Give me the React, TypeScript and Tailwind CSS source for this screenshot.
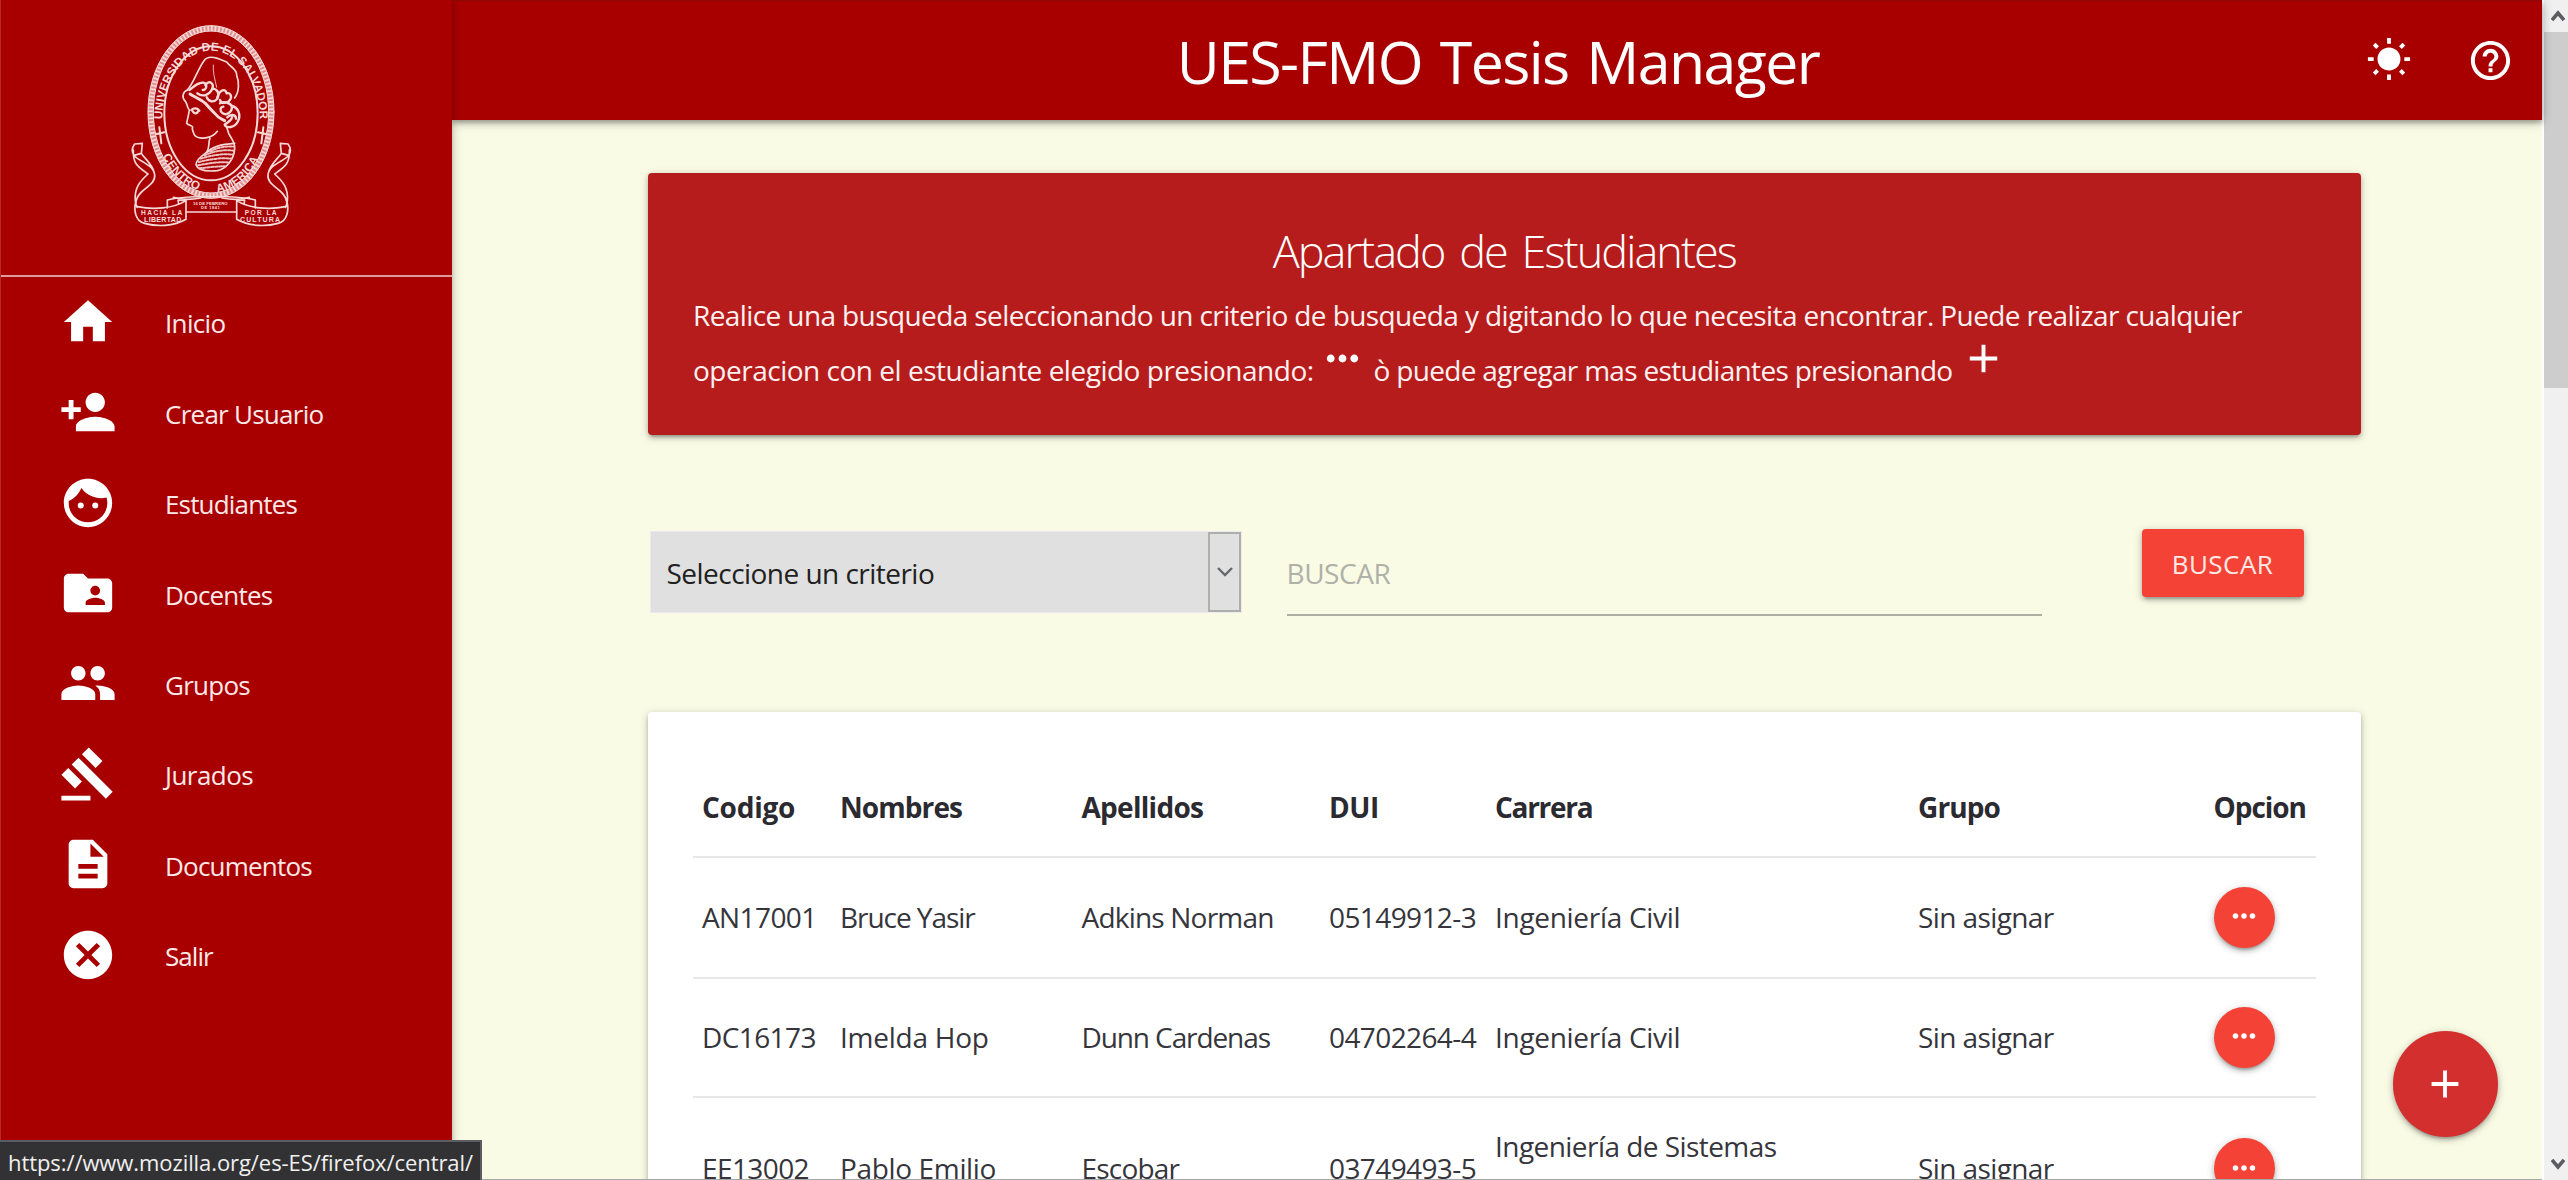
import type { ReactNode } from "react";
import {
  MdAdd,
  MdCancel,
  MdDescription,
  MdFace,
  MdFolderShared,
  MdGavel,
  MdGroup,
  MdHelpOutline,
  MdHome,
  MdMoreHoriz,
  MdPersonAdd,
  MdWbSunny,
} from "react-icons/md";

const SHADOW =
  "shadow-[0_3px_4px_0_rgba(0,0,0,0.14),0_5px_2px_-3px_rgba(0,0,0,0.14),0_2px_8px_0_rgba(0,0,0,0.22)]";

function Emblem() {
  return (
    <svg viewBox="0 0 600 690" className="h-[230px] w-[200px]" fill="none" stroke="#f6dada" strokeLinecap="round" strokeLinejoin="round">
      <defs>
        <path id="ring-top" d="M157 328 A146 206 0 0 1 449 328" />
        <path id="ring-left" d="M158 438 A172 242 0 0 0 268 541" />
        <path id="ring-right" d="M322 547 A172 242 0 0 0 450 438" />
      </defs>

      {/* rope border and inner oval */}
      <ellipse cx="303" cy="306" rx="181" ry="251" strokeWidth="17" stroke="#e08f8f" />
      <ellipse cx="303" cy="306" rx="181" ry="251" strokeWidth="15" strokeDasharray="5 6" strokeLinecap="butt" />
      <ellipse cx="303" cy="306" rx="189" ry="259" strokeWidth="3" />
      <ellipse cx="303" cy="306" rx="173" ry="243" strokeWidth="3" />
      <ellipse cx="303" cy="310" rx="140" ry="201" strokeWidth="6" />

      <g fill="#f6dada" stroke="none" className="font-['Liberation_Sans',sans-serif] text-[35px] font-bold">
        <text><textPath href="#ring-top" textLength="556">UNIVERSIDAD DE EL SALVADOR</textPath></text>
        <text><textPath href="#ring-left" textLength="152">CENTRO</textPath></text>
        <text><textPath href="#ring-right" textLength="166">AMERICA</textPath></text>
      </g>
      <g strokeWidth="6">
        <path d="M148 352l6 48M139 372l24 -5M460 352l-6 48M444 367l24 5" />
      </g>

      {/* bust in profile */}
      <g strokeWidth="5">
        <path d="M232 240C250 222 262 180 282 152C292 138 306 140 322 145L350 156C362 172 382 178 380 196C388 216 388 246 374 264" />
        <path d="M310 165C308 185 314 205 320 232" strokeWidth="2.5" />
        <path d="M232 240C218 246 214 262 226 274C232 280 230 292 238 300C236 315 232 328 230 340C238 348 246 346 248 352C244 358 250 364 252 372C258 386 280 386 294 382C306 380 316 372 322 364" />
        <path d="M240 252C256 262 272 268 286 280C296 292 306 302 316 312C326 326 336 328 344 332" strokeWidth="9" />
        <path d="M238 240C256 226 268 216 280 218C294 222 290 240 278 240M286 226C298 206 314 222 306 238C298 256 276 262 262 250M306 236C322 236 330 250 322 266C312 278 296 276 290 262" strokeWidth="7" />
        <path d="M322 262C330 236 346 236 350 250C362 246 368 262 358 272C350 282 332 280 330 270M330 280C340 274 360 276 366 290C366 306 350 318 338 310C328 302 330 292 340 290" strokeWidth="7" />
        <path d="M366 288C384 292 394 314 384 334C374 354 350 356 344 344C352 336 364 334 366 322M352 322C360 312 378 312 378 326" strokeWidth="7" />
        <path d="M244 300C252 292 262 294 268 302M248 304C252 312 262 312 264 304" strokeWidth="7" />
        <path d="M300 384C294 400 300 412 290 426C276 440 258 448 258 464C264 484 300 484 322 482C348 476 372 450 374 416C376 396 362 384 356 370L350 352" />
        <path d="M290 428C304 412 336 402 374 400" />
      </g>
      <g strokeWidth="6" strokeDasharray="7 5" stroke="#efc0c0">
        <path d="M300 424C322 412 348 408 372 410M284 436C310 424 340 418 372 422M272 446C304 436 338 430 370 434M266 456C300 448 334 442 364 446M264 466C296 460 330 454 356 458M268 475C296 472 326 468 344 469" />
      </g>

      {/* ribbon scrolls */}
      <g strokeWidth="5">
        <path d="M97 400L94 430L72 436C64 424 68 410 74 402L97 400M72 436C82 452 130 462 134 494C138 530 84 536 78 574C76 582 80 590 82 592M94 430C104 446 126 462 132 486M70 420C68 462 84 470 114 492M114 492C90 514 72 534 76 574" />
        <path d="M511 400L514 430L536 436C544 424 540 410 534 402L511 400M536 436C526 452 478 462 474 494C470 530 524 536 530 574C532 582 528 590 526 592M514 430C504 446 482 462 476 486M538 420C540 462 524 470 494 492M494 492C518 514 536 534 532 574" />
        <path d="M78 572C70 600 76 634 104 640C140 650 190 650 228 628V572C190 596 130 600 82 590M228 572L204 570L206 582M172 594V570C220 556 390 556 436 570V594M228 606H380" />
        <path d="M530 572C538 600 532 634 504 640C468 650 418 650 380 628V572C418 596 478 600 526 590M380 572L404 570L402 582" />
        <path d="M190 562C220 572 250 568 272 564M418 562C388 572 358 568 336 564" />
      </g>
      <g fill="#f6dada" stroke="none" textAnchor="middle" className="font-['Liberation_Sans',sans-serif] font-bold">
        <text x="155" y="616" className="text-[20px]" textLength="124">HACIA LA</text>
        <text x="158" y="637" className="text-[21px]" textLength="112">LIBERTAD</text>
        <text x="452" y="614" className="text-[20px]" textLength="96">POR LA</text>
        <text x="450" y="636" className="text-[21px]" textLength="120">CULTURA</text>
        <text x="301" y="584" className="text-[13px]" textLength="104">16 DE FEBRERO</text>
        <text x="301" y="598" className="text-[12px]" textLength="56">DE 1841</text>
      </g>
    </svg>
  );
}

const MENU: { icon: ReactNode; label: string; cls: string }[] = [
  { icon: <MdHome />, label: "Inicio", cls: "tracking-[-0.66px]" },
  { icon: <MdPersonAdd />, label: "Crear Usuario", cls: "tracking-[-0.74px]" },
  { icon: <MdFace />, label: "Estudiantes", cls: "tracking-[-0.83px]" },
  { icon: <MdFolderShared />, label: "Docentes", cls: "tracking-[-0.8px]" },
  { icon: <MdGroup />, label: "Grupos", cls: "tracking-[-0.75px]" },
  { icon: <MdGavel />, label: "Jurados", cls: "tracking-[-0.55px]" },
  { icon: <MdDescription />, label: "Documentos", cls: "tracking-[-0.8px]" },
  { icon: <MdCancel />, label: "Salir", cls: "tracking-[-0.95px]" },
];

const COLS =
  "grid grid-cols-[138px_241.5px_247.5px_166px_423px_295.5px_110.5px] items-center border-b-2 border-[#e7e7e7] *:pl-[9px]";

const STUDENTS = [
  { id: "AN17001", first: "Bruce Yasir", firstCls: "tracking-[-1.05px]", last: "Adkins Norman", lastCls: "tracking-[-0.8px]", dui: "05149912-3", career: "Ingeniería Civil", careerCls: "tracking-[-0.3px]", height: "h-[121px]" },
  { id: "DC16173", first: "Imelda Hop", firstCls: "tracking-[-0.25px]", last: "Dunn Cardenas", lastCls: "tracking-[-1.1px]", dui: "04702264-4", career: "Ingeniería Civil", careerCls: "tracking-[-0.3px]", height: "h-[119px]" },
  { id: "EE13002", first: "Pablo Emilio", firstCls: "tracking-[-0.35px]", last: "Escobar", lastCls: "tracking-[-0.8px]", dui: "03749493-5", career: "Ingeniería de Sistemas Informáticos", careerCls: "tracking-[-0.55px]", height: "h-[144px]" },
];

function Sidebar() {
  return (
    <aside className="relative z-20 flex w-[452px] shrink-0 flex-col border-l border-[#b52a2a] bg-[#a80000] shadow-[0_3px_4px_0_rgba(0,0,0,0.14),0_2px_10px_0_rgba(0,0,0,0.25)]">
      <div className="h-[277px] shrink-0 border-b-2 border-[#e09a9a] pl-[109px] pt-[10px]">
        <Emblem />
      </div>
      <nav>
        {MENU.map((m) => (
          <a key={m.label} className="flex h-[90.45px] items-center gap-[48px] pl-[58px] text-white">
            <span className="-mt-px text-[58px]">{m.icon}</span>
            <span className={`pt-[3px] text-[26px] text-[#ffe9e9] ${m.cls}`}>{m.label}</span>
          </a>
        ))}
      </nav>
    </aside>
  );
}

function Header() {
  return (
    <header className="relative z-10 grid h-[120px] shrink-0 grid-cols-[1fr_auto_1fr] items-center border-t border-[#8f0808] bg-[#a80000] text-white shadow-[0_3px_4px_0_rgba(0,0,0,0.2),0_2px_10px_0_rgba(0,0,0,0.3)]">
      <h1 className="col-start-2 pl-[2px] text-[59px] leading-[80px] tracking-[-1.6px] [word-spacing:4px]">UES-FMO Tesis Manager</h1>
      <div className="flex items-center justify-end gap-[55px] pr-[28px]">
        <MdWbSunny className="mb-[2px] size-[46px]" />
        <MdHelpOutline className="size-[47px]" />
      </div>
    </header>
  );
}

function Intro() {
  return (
    <section className={`h-[262.5px] w-[1712.5px] rounded-[4px] bg-[#b71c1c] px-[45px] pt-[51px] text-white ${SHADOW}`}>
      <h2 className="text-center text-[45px] font-light leading-[54px] tracking-[-1.93px] [word-spacing:5px]">Apartado de Estudiantes</h2>
      <div className="mt-[10.5px] whitespace-nowrap text-[28px] leading-[54.6px] text-[#fff1f1]">
        <p className="tracking-[-0.6px]">
          Realice una busqueda seleccionando un criterio de busqueda y digitando lo que necesita encontrar. Puede realizar cualquier
        </p>
        <p className="flex h-[54.6px] items-start">
          <span className="w-[626px] tracking-[-0.49px]">operacion con el estudiante elegido presionando:</span>
          <MdMoreHoriz className="mt-[-8px] size-[47px] text-white" />
          <span className="ml-[7.5px] w-[586px] tracking-[-0.69px]">ò puede agregar mas estudiantes presionando</span>
          <MdAdd className="mt-[-8px] size-[47px] text-white" />
        </p>
      </div>
    </section>
  );
}

function Search() {
  return (
    <form className="mt-[94px] flex h-[86.5px] w-[1712px] items-start text-[28px]">
      <div className="ml-[1.5px] mt-[1.5px] flex h-[82.5px] w-[592.5px] justify-between border border-[#ececf0] bg-[#e0e0e0] text-[#212121]">
        <span className="pl-4 pt-px leading-[80px] tracking-[-0.53px]">Seleccione un criterio</span>
        <span className="flex w-[33px] items-center justify-center border-2 border-[#adafaa] text-[#66696c]">
          <svg viewBox="0 0 16 10" className="h-[10px] w-[16px]" fill="none" stroke="currentColor" strokeWidth="2.4">
            <path d="M1 1l7 7l7-7" />
          </svg>
        </span>
      </div>
      <input
        placeholder="BUSCAR"
        className="ml-[44.5px] mt-px h-[86px] w-[755px] border-b-[2.5px] border-[#adafa5] bg-transparent pt-[2px] tracking-[-0.44px] outline-none placeholder:text-[#b0b1a8]"
      />
      <button
        type="button"
        className={`ml-[100px] h-[68px] w-[162px] rounded-[4px] bg-[#f44336] pt-[2px] text-[26px] tracking-[0.44px] text-[#ffe9e6] ${SHADOW}`}
      >
        BUSCAR
      </button>
    </form>
  );
}

function Students() {
  return (
    <section className={`mt-[96px] h-[600px] w-[1712.5px] shrink-0 rounded-[4px] bg-white px-[45px] pt-[46px] text-[28px] leading-[45px] text-[#35353b] ${SHADOW}`}>
      <div className={`${COLS} h-[100px] pt-[2px] font-bold text-[#2a2a30]`}>
        <span className="tracking-[-0.25px]">Codigo</span>
        <span className="tracking-[-0.93px]">Nombres</span>
        <span className="tracking-[-0.72px]">Apellidos</span>
        <span className="tracking-[-0.4px]">DUI</span>
        <span className="tracking-[-1.3px]">Carrera</span>
        <span className="tracking-[-0.9px]">Grupo</span>
        <span className="tracking-[-1.06px]">Opcion</span>
      </div>
      {STUDENTS.map((s) => (
        <div key={s.id} className={`${COLS} ${s.height}`}>
          <span className="tracking-[-0.6px]">{s.id}</span>
          <span className={s.firstCls}>{s.first}</span>
          <span className={s.lastCls}>{s.last}</span>
          <span className="tracking-[-0.6px]">{s.dui}</span>
          <span className={`pr-[110px] ${s.careerCls}`}>{s.career}</span>
          <span className="tracking-[-0.6px]">Sin asignar</span>
          <span>
            <button
              type="button"
              aria-label="Opciones"
              className={`flex size-[61px] items-center justify-center rounded-full bg-[#f44336] text-white ${SHADOW}`}
            >
              <MdMoreHoriz className="mb-[2px] size-[34px]" />
            </button>
          </span>
        </div>
      ))}
    </section>
  );
}

function Scrollbar() {
  return (
    <div className="flex w-[26px] shrink-0 flex-col border-l-2 border-white bg-[#f0f0f0] text-[#5b5b62]">
      <div className="flex h-8 items-center justify-center pl-[3px]">
        <svg viewBox="0 0 14 12" className="h-3 w-[14px]" fill="none" stroke="currentColor" strokeWidth="3.6">
          <path d="M1 10l6-7l6 7" />
        </svg>
      </div>
      <div className="h-[356px] bg-[#cdcdcd]" />
      <div className="mt-auto flex h-8 items-center justify-center pl-[3px]">
        <svg viewBox="0 0 14 12" className="h-3 w-[14px]" fill="none" stroke="currentColor" strokeWidth="3.6">
          <path d="M1 2l6 7l6-7" />
        </svg>
      </div>
    </div>
  );
}

export default function App() {
  return (
    <div className="relative flex h-[1180px] w-[2568px] overflow-hidden bg-[#f9fbe5] font-['Open_Sans',sans-serif]">
      <Sidebar />
      <div className="flex min-w-0 flex-1 flex-col">
        <Header />
        <main className="flex flex-col pl-[196px] pt-[52.5px]">
          <Intro />
          <Search />
          <Students />
        </main>
      </div>
      <Scrollbar />

      <button
        type="button"
        aria-label="Agregar estudiante"
        className={`absolute bottom-[43.5px] right-[70px] flex size-[105.5px] items-center justify-center rounded-full bg-[#d32f2f] text-white ${SHADOW}`}
      >
        <MdAdd className="size-[46px]" />
      </button>
      <div className="absolute bottom-0 left-0 right-[26px] z-20 h-px bg-[#a9a8a8]" />
      <div className="absolute bottom-0 left-0 z-30 flex h-10 w-[482px] items-center border-r-2 border-t-2 border-[#5a5c61] bg-[#323234] pl-[8px] pt-[2px] text-[22px] tracking-[-0.08px] text-[#f0f0f0]">
        https://www.mozilla.org/es-ES/firefox/central/
      </div>
    </div>
  );
}
